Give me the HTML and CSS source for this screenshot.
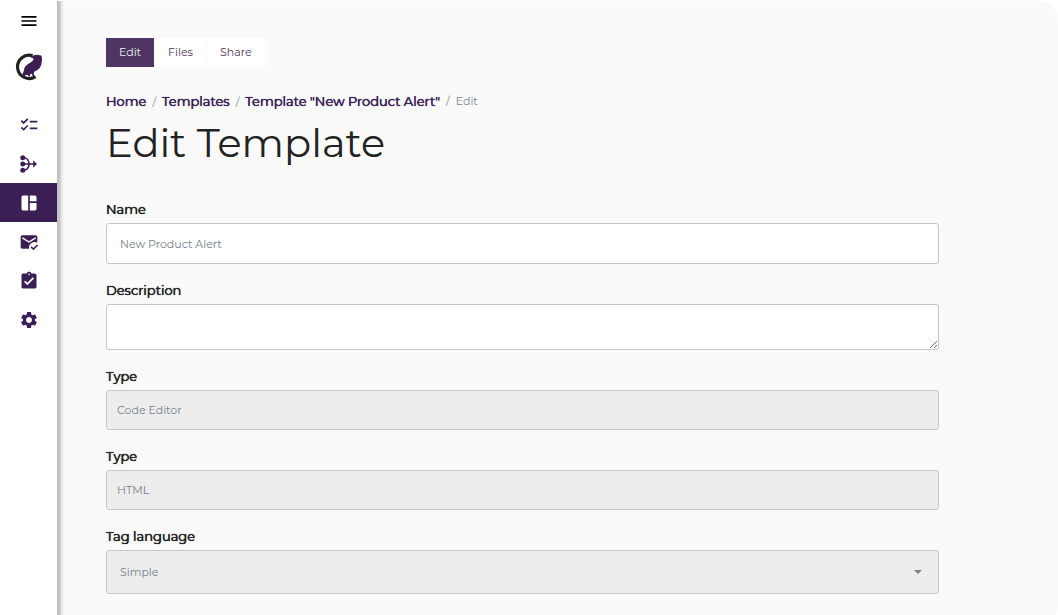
FILE: index.html
```html
<!doctype html>
<html lang="en">
    <head>
        <meta charset="utf-8">
        <meta name="viewport" content="width=device-width, initial-scale=1">
        <title>Edit Template</title>
        <link rel="stylesheet" href="styles.css">
    </head>
    <body>
        <nav class="sidebar">
            <button type="button" class="menu-toggle" aria-label="Menu">
                <svg viewBox="0 0 24 24"><path d="M3 18h18v-2H3v2zm0-5h18v-2H3v2zm0-7v2h18V6H3z"/></svg>
            </button>
            <a href="#" class="logo" aria-label="Dashboard">
                <svg viewBox="0 0 28 28">
                    <path d="M17.6 2.600A11.700 11.700 0 1 0 20.500 23.700" fill="none" stroke="#222" stroke-width="3.200"/>
                    <path d="M15.600 4.600C17.500 2.800 20 1.600 23 1.900L26.200 2.600C27.400 4.500 27 6.500 26.800 8.500C26.500 12 25.500 15 22.500 17L19.200 18.800L18.600 21.200L20 23H17.600L16.600 20.800L15 21.200L15.200 23.200H13.200L12.800 21.800L10.500 22.200L7.600 24.600L7.200 22L9 17.200C9 14.500 11 12.500 13.500 10.800C15.600 9.300 18 8.500 18.400 6.200L18.200 5.200z" fill="#3b1f54"/>
                </svg>
            </a>
            <ul class="nav-list">
                <li><a href="#" aria-label="Tasks">
                    <svg viewBox="0 0 24 24"><path d="M22 7h-9v2h9V7zm0 8h-9v2h9v-2zM5.54 11 2 7.46l1.41-1.41 2.12 2.12 4.24-4.24 1.41 1.41L5.54 11zm0 8L2 15.46l1.41-1.41 2.12 2.12 4.24-4.24 1.41 1.41L5.54 19z"/></svg>
                </a></li>
                <li><a href="#" aria-label="Workflows">
                    <svg viewBox="0 0 24 24">
                        <circle cx="4.500" cy="4.500" r="3"/><circle cx="4.500" cy="12" r="3"/><circle cx="4.500" cy="19.500" r="3"/>
                        <path d="M5 4.500C9.500 4.500 12 8 12 12S9.500 19.500 5 19.500M5 12H18" fill="none" stroke="currentColor" stroke-width="2"/>
                        <path d="M17 7.500 21.500 12 17 16.500z"/>
                    </svg>
                </a></li>
                <li><a href="#" class="active" aria-label="Templates">
                    <svg viewBox="0 0 24 24"><path d="M11 21H5c-1.100 0-2-.9-2-2V5c0-1.100.9-2 2-2h6v18zm2 0h6c1.100 0 2-.9 2-2v-7h-8v9zm8-11V5c0-1.100-.9-2-2-2h-6v7h8z"/></svg>
                </a></li>
                <li><a href="#" aria-label="Mailings">
                    <svg viewBox="0 0 24 24"><path d="M12 19c0-3.870 3.130-7 7-7 1.080 0 2.090.25 3 .68V6c0-1.100-.9-2-2-2H4c-1.100 0-2 .9-2 2v12c0 1.100.9 2 2 2h8.080c-.05-.33-.08-.66-.08-1zM4 6l8 5 8-5v2l-8 5-8-5V6zm13.340 16-3.540-3.540 1.410-1.410 2.120 2.120 4.240-4.240L23 16.340 17.340 22z"/></svg>
                </a></li>
                <li><a href="#" aria-label="Reports">
                    <svg viewBox="0 0 24 24"><path d="M19 3h-4.180C14.400 1.840 13.300 1 12 1s-2.400.84-2.820 2H5c-1.100 0-2 .9-2 2v14c0 1.100.9 2 2 2h14c1.100 0 2-.9 2-2V5c0-1.100-.9-2-2-2zm-7 0c.55 0 1 .45 1 1s-.45 1-1 1-1-.45-1-1 .45-1 1-1zm-2 14-4-4 1.410-1.410L10 14.170l6.590-6.590L18 9l-8 8z"/></svg>
                </a></li>
                <li><a href="#" aria-label="Settings">
                    <svg viewBox="0 0 24 24"><path d="M19.140 12.940c.04-.3.06-.61.06-.94 0-.32-.02-.64-.07-.94l2.030-1.580c.18-.14.23-.41.12-.61l-1.920-3.320c-.12-.22-.37-.29-.59-.22l-2.390.96c-.5-.38-1.030-.7-1.620-.94l-.36-2.540c-.04-.24-.24-.41-.48-.41h-3.840c-.24 0-.43.17-.47.41l-.36 2.540c-.59.24-1.130.57-1.620.94l-2.390-.96c-.22-.08-.47 0-.59.22L2.740 8.870c-.12.21-.08.47.12.61l2.030 1.580c-.05.3-.09.63-.09.94s.02.64.07.94l-2.030 1.580c-.18.14-.23.41-.12.61l1.920 3.320c.12.22.37.29.59.22l2.390-.96c.5.38 1.030.7 1.620.94l.36 2.540c.05.24.24.41.48.41h3.840c.24 0 .44-.17.47-.41l.36-2.540c.59-.24 1.130-.56 1.620-.94l2.390.96c.22.08.47 0 .59-.22l1.920-3.320c.12-.22.07-.47-.12-.61l-2.010-1.580zM12 15.600c-1.980 0-3.600-1.620-3.600-3.600s1.620-3.600 3.600-3.600 3.600 1.620 3.600 3.600-1.620 3.600-3.600 3.600z"/></svg>
                </a></li>
            </ul>
        </nav>
        <main class="content">
            <div class="tabs">
                <a href="#" class="tab active">Edit</a>
                <a href="#" class="tab">Files</a>
                <a href="#" class="tab">Share</a>
            </div>
            <ol class="breadcrumb">
                <li><a href="#">Home</a></li>
                <li><a href="#">Templates</a></li>
                <li><a href="#">Template "New Product Alert"</a></li>
                <li>Edit</li>
            </ol>
            <h1>Edit Template</h1>
            <form>
                <div class="field">
                    <label for="name">Name</label>
                    <input type="text" id="name" value="New Product Alert">
                </div>
                <div class="field">
                    <label for="description">Description</label>
                    <textarea id="description"></textarea>
                </div>
                <div class="field">
                    <label for="type">Type</label>
                    <input type="text" id="type" class="plain" value="Code Editor" disabled>
                </div>
                <div class="field">
                    <label for="format">Type</label>
                    <input type="text" id="format" class="plain" value="HTML" disabled>
                </div>
                <div class="field">
                    <label for="tag-language">Tag language</label>
                    <div class="select">
                        <select id="tag-language" disabled>
                            <option>Simple</option>
                        </select>
                    </div>
                </div>
            </form>
        </main>
    </body>
</html>
```
FILE: styles.css
```css
* {
    box-sizing: border-box;
}
body {
    display: flex;
    min-height: 100vh;
    margin: 0;
    padding-top: 1px;
    background: #fff;
    color: #222;
    font-family: Montserrat, Inter, sans-serif;
    font-size: 11px;
}
a {
    color: #3b1f54;
    text-decoration: none;
}

/* sidebar */
.sidebar {
    display: flex;
    flex-direction: column;
    align-items: center;
    flex: 0 0 57px;
    padding-top: 10px;
}
.sidebar svg {
    display: block;
    width: 20px;
    height: 20px;
    fill: currentColor;
}
.menu-toggle {
    padding: 0;
    border: 0;
    background: none;
    color: #000;
    cursor: pointer;
}
.sidebar .logo svg {
    width: 28px;
    height: 28px;
}
.logo {
    margin: 22px 0 24px;
}
.nav-list {
    width: 100%;
    margin: 0;
    padding: 0;
    list-style: none;
}
.nav-list a {
    display: flex;
    align-items: center;
    justify-content: center;
    height: 39px;
}
.nav-list .active {
    background: #3b1f54;
    color: #fff;
}

/* content */
.content {
    flex: 1;
    min-width: 0;
    padding: 37px 119px 16px 49px;
    border-radius: 0 20px 20px 0;
    background: #fafafa linear-gradient(to right, #bcbebe, #c8caca 3px, #eee 5px, #fafafa 8px);
}
.tabs {
    display: flex;
    gap: 1px;
}
.tab {
    padding: 0 13px;
    background: #fff;
    color: #4e3564;
    line-height: 29px;
}
.tab.active {
    background: #4e3564;
    color: #eee;
}
.breadcrumb {
    display: flex;
    margin: 24px 0 0;
    padding: 0;
    color: #7d8892;
    line-height: 20px;
    list-style: none;
}
.breadcrumb a {
    font-size: 13px;
    text-shadow: 0 0 0 currentColor, 0 0 1px currentColor;
}
.breadcrumb li + li::before {
    content: "/";
    padding: 0 6px;
}
h1 {
    margin: 7px 0 32px;
    font-size: 40px;
    font-weight: 400;
    line-height: 48px;
}

/* form */
.field {
    margin-bottom: 16px;
}
.field label {
    display: block;
    margin-bottom: 4px;
    font-size: 13px;
    line-height: 20px;
    text-shadow: 0 0 0 currentColor, 0 0 1px currentColor;
}
.field input,
.field textarea,
.field select {
    display: block;
    width: 100%;
    height: 41px;
    padding: 0 13px;
    border: 1px solid #c1c7ce;
    border-radius: 3px;
    background: #fff;
    color: #73808c;
    font: inherit;
}
.field textarea {
    height: 46px;
    padding: 12px 13px;
    resize: vertical;
}
.field .plain {
    height: 40px;
    padding: 0 10px;
}
.field select {
    height: 44px;
    appearance: none;
    opacity: 1;
}
.field input:disabled,
.field select:disabled {
    background: #ededed;
}
.select {
    position: relative;
}
.select::after {
    content: "";
    position: absolute;
    top: 20px;
    right: 17px;
    border: 4px solid transparent;
    border-top-color: #808080;
    border-bottom: 0;
    pointer-events: none;
}
```
